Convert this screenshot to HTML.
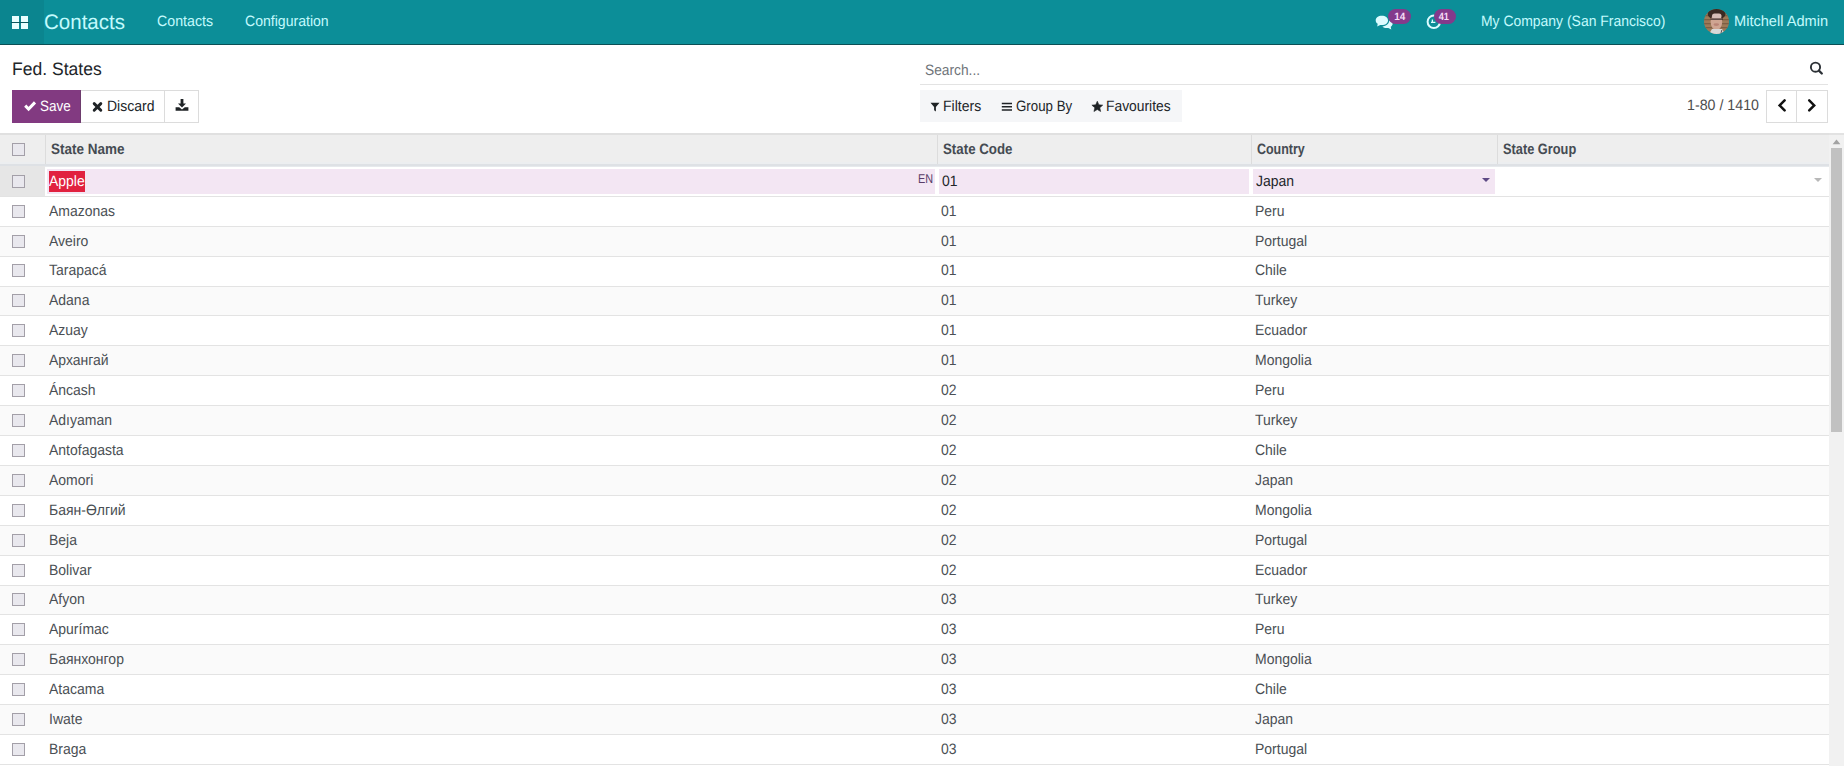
<!DOCTYPE html>
<html><head><meta charset="utf-8">
<style>
*{box-sizing:border-box;margin:0;padding:0}
html,body{width:1844px;height:766px;overflow:hidden;background:#fff;font-family:"Liberation Sans",sans-serif;color:#4c4c4c;text-rendering:geometricPrecision}
.a{position:absolute;white-space:nowrap;line-height:1;font-size:15px;transform-origin:0 0;margin-top:1.2px}
svg{position:absolute;overflow:visible}
#nav{position:absolute;left:0;top:0;width:1844px;height:45px;background:#0c8e98;border-bottom:1px solid #0b4f55}
#apps{position:absolute;left:0;top:0;width:44px;height:44px;background:rgba(0,0,0,0.06)}
.nt{position:absolute;white-space:nowrap;line-height:1;color:#c4fafd;font-size:15px;top:13px;transform-origin:0 0;margin-top:1.2px}
.badge{position:absolute;top:9.3px;height:14.6px;border-radius:8px;background:#843a8b;color:#f6dcf6;font-size:10.5px;font-weight:bold;line-height:15px;text-align:center}
.btn{position:absolute;top:90px;height:33px;border:1px solid #dcdcdc;background:#fff}
.hdr{position:absolute;left:0;top:133px;width:1829px;height:33px;background:#eeeeee;border-top:2px solid #e0e0e0;border-bottom:2px solid #dee1e5}
.vd{position:absolute;top:135px;width:1px;height:29px;background:#dcdcdc}
.ht{position:absolute;white-space:nowrap;line-height:1;top:140.8px;font-size:15px;font-weight:bold;color:#454b52;transform:scaleX(.899);transform-origin:0 0;margin-top:1.2px}
.cb{position:absolute;left:12px;top:8px;width:13px;height:13px;border:1px solid #a39fa8;background:#e9e8ee;border-radius:0}
.row{position:absolute;left:0;width:1829px;border-bottom:1px solid #e3e3e3;background:#fff}
.row.odd{background:#fafafa}
.td{position:absolute;white-space:nowrap;line-height:1;top:5.8px;font-size:15px;color:#4a4f54;transform:scaleX(.932);transform-origin:0 0;margin-top:1.2px}
#sb{position:absolute;left:1829px;top:133px;width:15px;height:633px;background:#f1f1f1}
#thumb{position:absolute;left:2px;top:15px;width:11px;height:284px;background:#c1c1c1}
#sbup{position:absolute;left:4px;top:7px;width:0;height:0;border-left:3.5px solid transparent;border-right:3.5px solid transparent;border-bottom:4px solid #a3a3a3}
.s29 .cb{top:7px}
.s29 .td{top:4.8px}

</style></head><body>
<div id="nav">
  <div id="apps"></div>
  <div style="position:absolute;left:11px;top:22px;width:18px;height:1px;background:#0a5a60"></div>
  <div style="position:absolute;left:12px;top:16px;width:7px;height:6px;background:#eaffff"></div>
  <div style="position:absolute;left:21px;top:16px;width:7px;height:6px;background:#eaffff"></div>
  <div style="position:absolute;left:12px;top:23px;width:7px;height:6px;background:#eaffff"></div>
  <div style="position:absolute;left:21px;top:23px;width:7px;height:6px;background:#eaffff"></div>
  <span class="nt" style="left:43.7px;top:11px;font-size:21px;transform:scaleX(.977)">Contacts</span>
  <span class="nt" style="left:156.6px;transform:scaleX(.947)">Contacts</span>
  <span class="nt" style="left:244.7px;transform:scaleX(.938)">Configuration</span>
  <svg style="left:1375px;top:15px" width="18" height="15" viewBox="0 0 18 15">
    <path fill="#dcfcff" d="M6.8 0.8C3.2 0.8 0.7 2.9 0.7 5.4c0 1.4 0.8 2.6 2 3.4L2.2 11.5l3-1.6c0.5 0.1 1 0.2 1.6 0.2 3.6 0 6.2-2.1 6.2-4.7S10.4 0.8 6.8 0.8z"/>
    <path fill="#dcfcff" d="M14.2 5.8c0 3-3 5.4-6.8 5.6 1 1 2.6 1.6 4.4 1.6 0.5 0 1 0 1.5-0.1l3 1.7-0.6-2.8c1.2-0.8 2-2 2-3.3 0-1.1-0.6-2.1-1.4-2.9z"/>
  </svg>
  <div class="badge" style="left:1387.8px;width:23px"><span style="display:inline-block;position:relative;left:.8px;top:.6px;transform:scaleX(.95)">14</span></div>
  <svg style="left:1426px;top:14px" width="16" height="16" viewBox="0 0 16 16">
    <circle cx="7.8" cy="7.8" r="6.2" fill="none" stroke="#dcfcff" stroke-width="2"/>
    <path d="M6.4 5.4v2.8M5 8.4h4.4" fill="none" stroke="#dcfcff" stroke-width="1.3"/>
  </svg>
  <div class="badge" style="left:1434.3px;width:21.5px"><span style="display:inline-block;position:relative;left:-.9px;top:.6px;transform:scaleX(.88)">41</span></div>
  <span class="nt" style="left:1481.2px;top:12.7px;transform:scaleX(.929)">My Company (San Francisco)</span>
  <svg style="left:1703.5px;top:9.2px" width="25" height="25" viewBox="0 0 25 25">
    <defs><clipPath id="av"><circle cx="12.5" cy="12.5" r="12.5"/></clipPath></defs>
    <g clip-path="url(#av)">
      <rect width="25" height="25" fill="#9c7a58"/>
      <rect x="0" y="6" width="25" height="1.3" fill="#7d5f45"/>
      <rect x="0" y="10" width="25" height="1.3" fill="#7d5f45"/>
      <rect x="0" y="14" width="25" height="1.3" fill="#7d5f45"/>
      <rect x="0" y="18" width="25" height="1.3" fill="#7d5f45"/>
      <ellipse cx="12.6" cy="5" rx="9" ry="5.5" fill="#3a2a22"/>
      <ellipse cx="12.4" cy="13" rx="5.8" ry="8" fill="#cfa592"/>
      <rect x="8" y="4.5" width="9.5" height="5" rx="2.5" fill="#d6beb6"/>
      <path d="M6.5 10.2h12.5" stroke="#3b2f2c" stroke-width="1.2"/>
      <ellipse cx="12.3" cy="15.6" rx="2.8" ry="1.3" fill="#b98476"/>
      <path d="M5 25l3-5h10l3 5z" fill="#d8d8d8"/>
      <path d="M17.8 21l-1 4" stroke="#555" stroke-width="1"/>
    </g>
  </svg>
  <span class="nt" style="left:1734.1px;top:12.9px;transform:scaleX(.972)">Mitchell Admin</span>
</div>
<span class="a" style="left:11.7px;top:59px;font-size:18px;color:#212529;transform:scaleX(.974)">Fed. States</span>
<div class="btn" style="left:80px;width:85px"></div>
<div class="btn" style="left:164px;width:35px"></div>
<div class="btn" style="left:12px;width:69px;background:#823a81;border-color:#823a81;border-right-color:#6d3c6d"></div>
<svg style="left:23px;top:100px" width="14" height="12" viewBox="0 0 14 12">
  <path d="M2.2 5.6l3.4 3.4 6.4-6.6" fill="none" stroke="#fff" stroke-width="3" stroke-linejoin="miter"/>
</svg>
<span class="a" style="left:39.7px;top:98px;color:#fff;transform:scaleX(.9)">Save</span>
<svg style="left:92px;top:101px" width="11" height="11" viewBox="0 0 11 11">
  <path d="M2.2 2.6l6.6 6.6M8.8 2.6l-6.6 6.6" fill="none" stroke="#1f2326" stroke-width="2.9" stroke-linecap="round"/>
</svg>
<span class="a" style="left:106.6px;top:97.8px;color:#212529;transform:scaleX(.933)">Discard</span>
<svg style="left:175px;top:98px" width="14" height="14" viewBox="0 0 14 14">
  <path fill="#1f2326" d="M5.6 1h2.8v4.6h2.6L7 9.4 3 5.6h2.6z"/>
  <path fill="#1f2326" d="M0.6 9.2h3.6L7 11.6l2.8-2.4h3.6v3.6H0.6z"/>
</svg>
<span class="a" style="left:924.6px;top:61.8px;color:#6f7479;transform:scaleX(.917)">Search...</span>
<svg style="left:1809px;top:61px" width="15" height="15" viewBox="0 0 15 15">
  <circle cx="6.5" cy="6.2" r="4.6" fill="none" stroke="#2c3136" stroke-width="1.9"/>
  <path d="M9.9 9.6l2.9 2.9" stroke="#2c3136" stroke-width="2.3" stroke-linecap="round"/>
</svg>
<div style="position:absolute;left:920px;top:84px;width:908px;height:1px;background:#e3e3e3"></div>
<div style="position:absolute;left:920px;top:90px;width:262px;height:32px;background:#f5f6f8"></div>
<svg style="left:930px;top:102.3px" width="10" height="10" viewBox="0 0 10 10">
  <path fill="#1f2326" d="M0.5 0.8h9L5.9 5v4.4L4.1 8.2V5z"/>
</svg>
<span class="a" style="left:942.8px;top:98.1px;color:#212529;transform:scaleX(.935)">Filters</span>
<svg style="left:1001px;top:102.2px" width="12" height="10" viewBox="0 0 12 10">
  <path d="M0.8 1.6h10.2M0.8 4.8h10.2M0.8 8h10.2" stroke="#1f2326" stroke-width="1.5"/>
</svg>
<span class="a" style="left:1015.7px;top:98.1px;color:#212529;transform:scaleX(.886)">Group By</span>
<svg style="left:1091.8px;top:100.5px" width="11" height="11" viewBox="0 0 11 11">
  <path fill="#1f2326" stroke="#1f2326" stroke-width=".6" stroke-linejoin="round" d="M5.30 0.20L6.83 3.80L10.72 4.14L7.77 6.70L8.65 10.51L5.30 8.50L1.95 10.51L2.83 6.70L-0.12 4.14L3.77 3.80z"/>
</svg>
<span class="a" style="left:1106.1px;top:98px;color:#212529;transform:scaleX(.923)">Favourites</span>
<span class="a" style="left:1687px;top:96.9px;color:#4c4c4c;transform:scaleX(.948)">1-80 / 1410</span>
<div class="btn" style="left:1766px;width:31px"></div>
<div class="btn" style="left:1796px;width:32px"></div>
<svg style="left:1777px;top:99px" width="10" height="13" viewBox="0 0 10 13">
  <path d="M7.6 1.4L2.6 6.4l5 5" fill="none" stroke="#111" stroke-width="2.5" stroke-linecap="round"/>
</svg>
<svg style="left:1807px;top:99px" width="10" height="13" viewBox="0 0 10 13">
  <path d="M2.2 1.4l5 5-5 5" fill="none" stroke="#111" stroke-width="2.5" stroke-linecap="round"/>
</svg>
<div class="hdr"></div>
<div style="position:absolute;left:0;top:162px;width:1829px;height:2px;background:#eceef0"></div>
<div class="vd" style="left:45px"></div>
<div class="vd" style="left:937px"></div>
<div class="vd" style="left:1251px"></div>
<div class="vd" style="left:1497px"></div>
<div class="cb" style="top:143px"></div>
<span class="ht" style="left:50.6px">State Name</span>
<span class="ht" style="left:942.8px;transform:scaleX(.887)">State Code</span>
<span class="ht" style="left:1256.7px;transform:scaleX(.831)">Country</span>
<span class="ht" style="left:1502.6px;transform:scaleX(.853)">State Group</span>
<div style="position:absolute;left:0;top:166px;width:1829px;height:31px;background:#fff;border-bottom:1px solid #e3e3e3;border-top:1px solid #e6e9ec"></div>
<div style="position:absolute;left:0;top:166px;width:45px;height:30px;background:#e6e6e6"></div>
<div class="cb" style="top:175px"></div>
<div style="position:absolute;left:47px;top:169px;width:888px;height:25px;background:#f3e6f3"></div>
<div style="position:absolute;left:49px;top:171px;width:36px;height:21px;background:#e1213f"></div>
<span class="a" style="left:49px;top:172.8px;color:#fff;transform:scaleX(.932)">Apple</span>
<span class="a" style="left:917.5px;top:171.9px;font-size:12.7px;color:#5a3d68;transform:scaleX(.856)">EN</span>
<div style="position:absolute;left:939px;top:169px;width:310px;height:25px;background:#f3e6f3"></div>
<span class="a" style="left:941.5px;top:172.8px;color:#212529;transform:scaleX(.932)">01</span>
<div style="position:absolute;left:1253px;top:169px;width:242px;height:25px;background:#f3e6f3"></div>
<span class="a" style="left:1255.5px;top:172.8px;color:#212529;transform:scaleX(.932)">Japan</span>
<div style="position:absolute;left:1482px;top:178px;width:0;height:0;border-left:4px solid transparent;border-right:4px solid transparent;border-top:4px solid #5e4a85"></div>
<div style="position:absolute;left:1814px;top:178px;width:0;height:0;border-left:4px solid transparent;border-right:4px solid transparent;border-top:4px solid #b8b8b8"></div>

<div id="rows">
<div class="row" style="top:197px;height:30px"><div class="cb"></div><span class="td" style="left:49px">Amazonas</span><span class="td" style="left:941px">01</span><span class="td" style="left:1255px">Peru</span></div>
<div class="row odd" style="top:227px;height:30px"><div class="cb"></div><span class="td" style="left:49px">Aveiro</span><span class="td" style="left:941px">01</span><span class="td" style="left:1255px">Portugal</span></div>
<div class="row s29" style="top:257px;height:30px"><div class="cb"></div><span class="td" style="left:49px">Tarapacá</span><span class="td" style="left:941px">01</span><span class="td" style="left:1255px">Chile</span></div>
<div class="row odd s29" style="top:287px;height:29px"><div class="cb"></div><span class="td" style="left:49px">Adana</span><span class="td" style="left:941px">01</span><span class="td" style="left:1255px">Turkey</span></div>
<div class="row" style="top:316px;height:30px"><div class="cb"></div><span class="td" style="left:49px">Azuay</span><span class="td" style="left:941px">01</span><span class="td" style="left:1255px">Ecuador</span></div>
<div class="row odd" style="top:346px;height:30px"><div class="cb"></div><span class="td" style="left:49px">Архангай</span><span class="td" style="left:941px">01</span><span class="td" style="left:1255px">Mongolia</span></div>
<div class="row" style="top:376px;height:30px"><div class="cb"></div><span class="td" style="left:49px">Áncash</span><span class="td" style="left:941px">02</span><span class="td" style="left:1255px">Peru</span></div>
<div class="row odd" style="top:406px;height:30px"><div class="cb"></div><span class="td" style="left:49px">Adıyaman</span><span class="td" style="left:941px">02</span><span class="td" style="left:1255px">Turkey</span></div>
<div class="row" style="top:436px;height:30px"><div class="cb"></div><span class="td" style="left:49px">Antofagasta</span><span class="td" style="left:941px">02</span><span class="td" style="left:1255px">Chile</span></div>
<div class="row odd" style="top:466px;height:30px"><div class="cb"></div><span class="td" style="left:49px">Aomori</span><span class="td" style="left:941px">02</span><span class="td" style="left:1255px">Japan</span></div>
<div class="row" style="top:496px;height:30px"><div class="cb"></div><span class="td" style="left:49px">Баян-Өлгий</span><span class="td" style="left:941px">02</span><span class="td" style="left:1255px">Mongolia</span></div>
<div class="row odd" style="top:526px;height:30px"><div class="cb"></div><span class="td" style="left:49px">Beja</span><span class="td" style="left:941px">02</span><span class="td" style="left:1255px">Portugal</span></div>
<div class="row" style="top:556px;height:30px"><div class="cb"></div><span class="td" style="left:49px">Bolivar</span><span class="td" style="left:941px">02</span><span class="td" style="left:1255px">Ecuador</span></div>
<div class="row odd s29" style="top:586px;height:29px"><div class="cb"></div><span class="td" style="left:49px">Afyon</span><span class="td" style="left:941px">03</span><span class="td" style="left:1255px">Turkey</span></div>
<div class="row" style="top:615px;height:30px"><div class="cb"></div><span class="td" style="left:49px">Apurímac</span><span class="td" style="left:941px">03</span><span class="td" style="left:1255px">Peru</span></div>
<div class="row odd" style="top:645px;height:30px"><div class="cb"></div><span class="td" style="left:49px">Баянхонгор</span><span class="td" style="left:941px">03</span><span class="td" style="left:1255px">Mongolia</span></div>
<div class="row" style="top:675px;height:30px"><div class="cb"></div><span class="td" style="left:49px">Atacama</span><span class="td" style="left:941px">03</span><span class="td" style="left:1255px">Chile</span></div>
<div class="row odd" style="top:705px;height:30px"><div class="cb"></div><span class="td" style="left:49px">Iwate</span><span class="td" style="left:941px">03</span><span class="td" style="left:1255px">Japan</span></div>
<div class="row" style="top:735px;height:30px"><div class="cb"></div><span class="td" style="left:49px">Braga</span><span class="td" style="left:941px">03</span><span class="td" style="left:1255px">Portugal</span></div>
</div>
<div id="sb"><svg style="left:0;top:0" width="15" height="15"><path d="M3.6 11.2h7.8L7.5 6.6z" fill="#a3a3a3"/></svg><div id="thumb"></div></div>
<div style="position:absolute;left:1829px;top:133px;width:15px;height:2px;background:#e2e2e2"></div>
</body></html>
